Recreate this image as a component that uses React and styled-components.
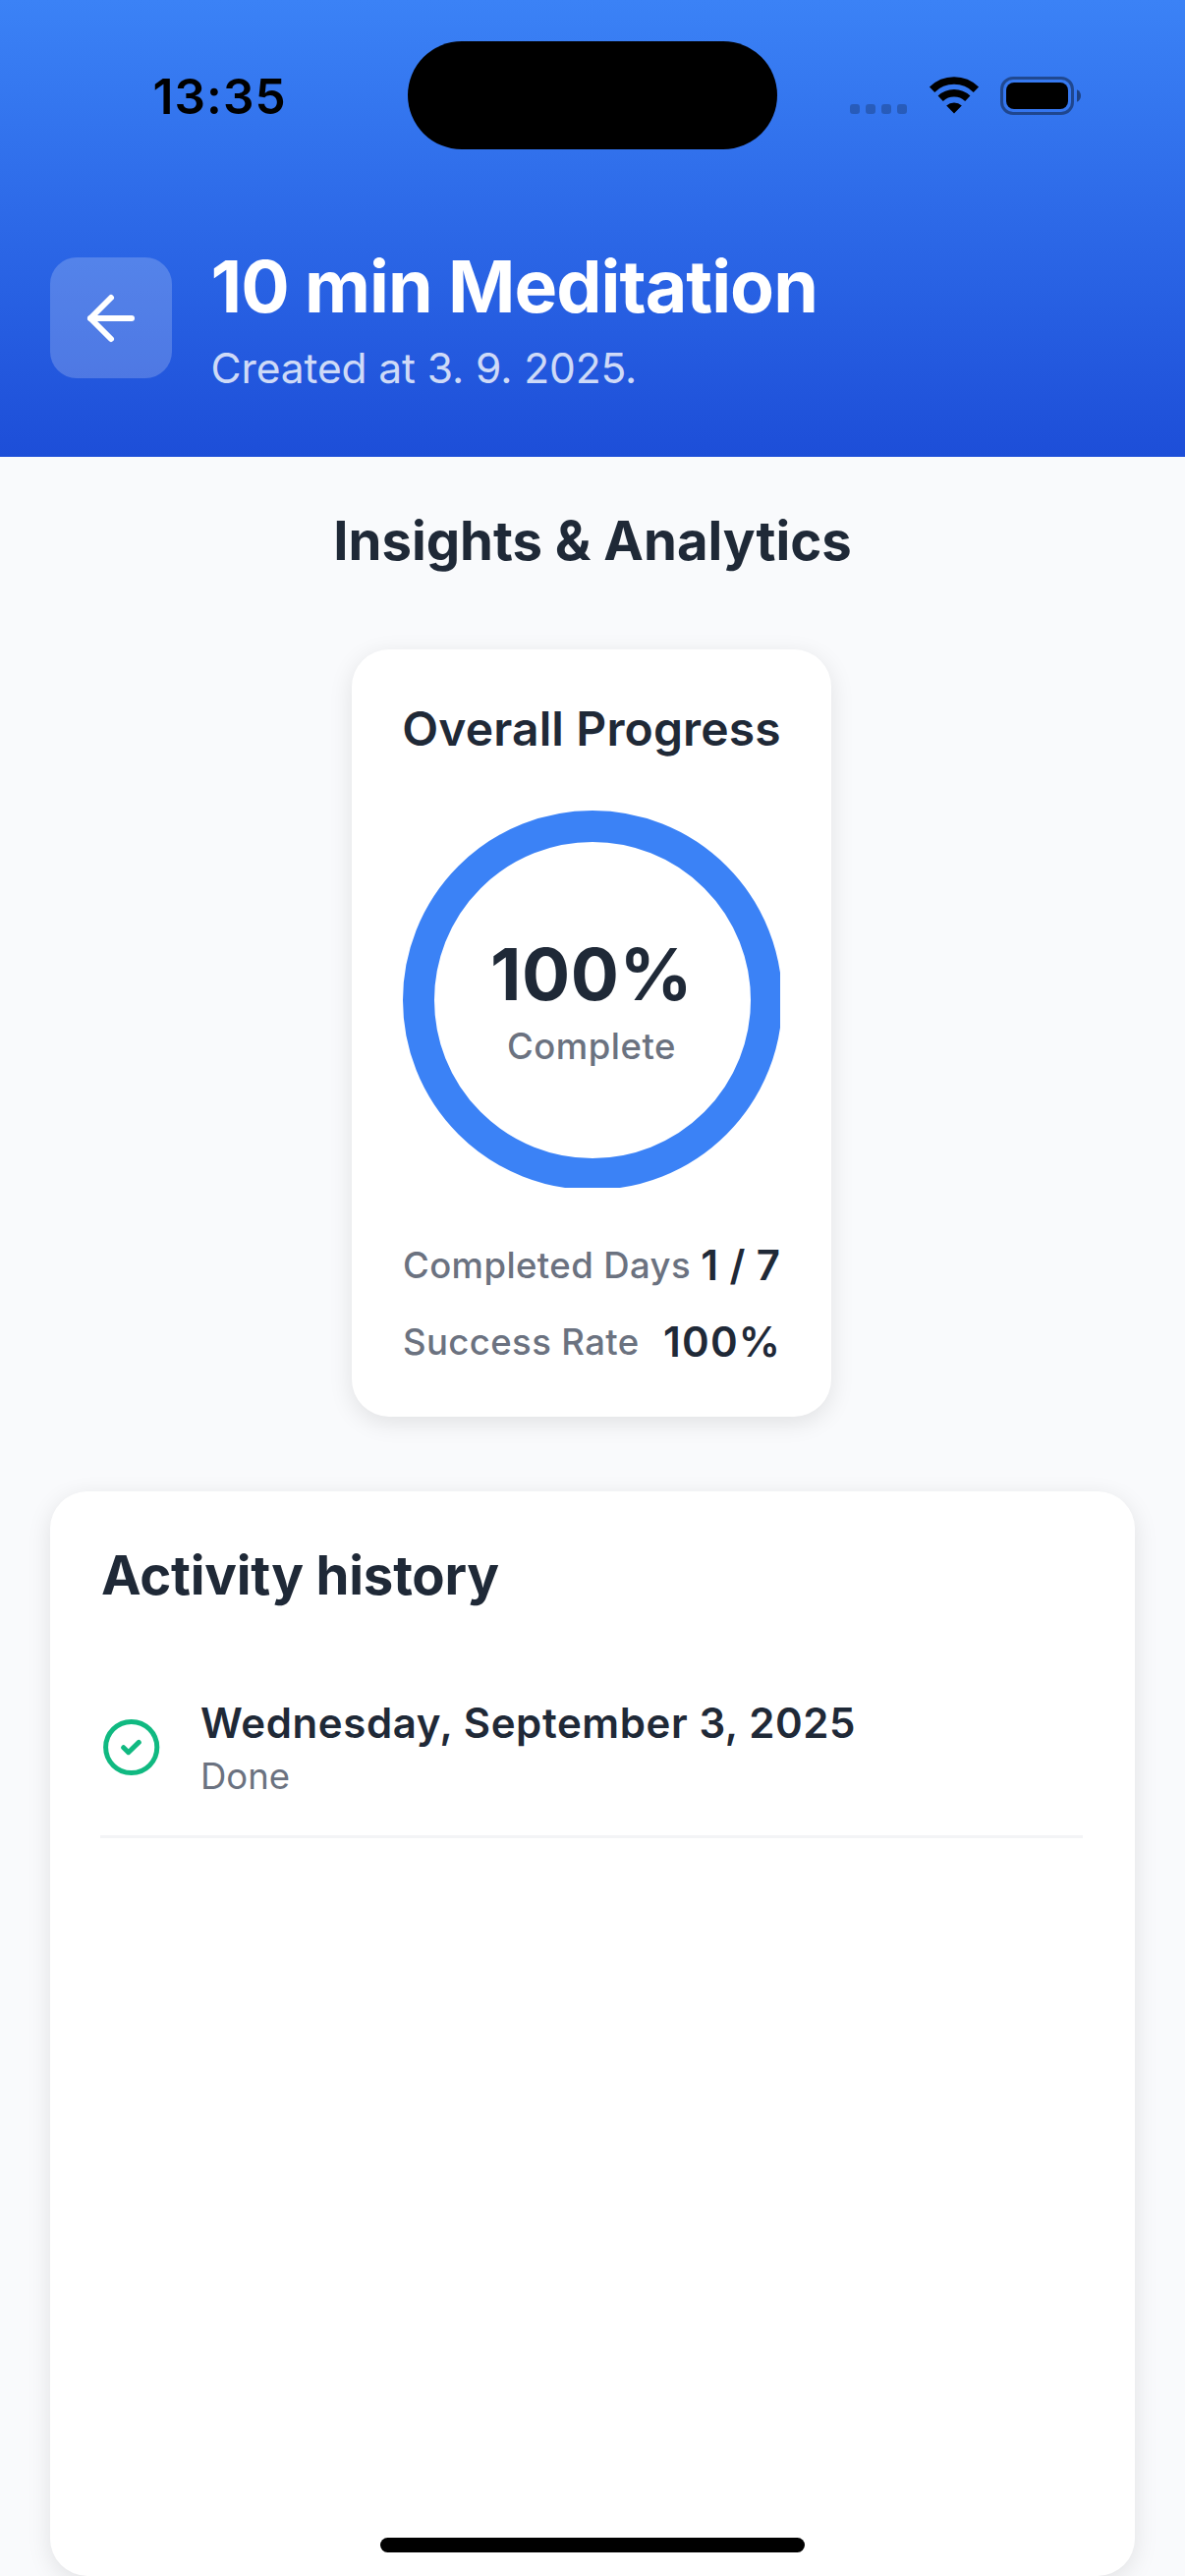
import React from "react";
import styled, { createGlobalStyle } from "styled-components";
import { ArrowLeft } from "lucide-react";

const GlobalStyle = createGlobalStyle`
  * { box-sizing: border-box; }
  html, body { margin: 0; padding: 0; background: #f9fafc; }
  body { font-family: Inter, "Liberation Sans", sans-serif; overflow: hidden; }
`;

const Screen = styled.main`
  position: relative;
  display: flex;
  flex-direction: column;
  width: 1206px;
  height: 2622px;
  overflow: hidden;
  background: #f9fafc;
`;

const Header = styled.header`
  height: 465px;
  background: linear-gradient(180deg, #3b82f6 0%, #1d4ed8 100%);
`;

const StatusBar = styled.div`
  display: grid;
  grid-template-columns: 415px 376px 1fr;
  height: 248px;
  padding-top: 42px;
  align-items: start;
`;

const Time = styled.span`
  padding-left: 155.5px;
  margin-top: 26px;
  font-size: 49.5px;
  line-height: 60px;
  font-weight: 600;
  letter-spacing: 1.1px;
  color: #000;
`;

const Island = styled.div`
  height: 110px;
  border-radius: 55px;
  background: #000;
`;

const StatusIcons = styled.div`
  display: flex;
  align-items: flex-end;
  height: 75px;
  padding-left: 74px;
`;

const Signal = styled.div`
  display: flex;
  gap: 6px;
  margin-bottom: 1px;
`;

const SignalDot = styled.i`
  width: 10px;
  height: 10px;
  border-radius: 3px;
  background: rgba(0, 0, 0, 0.22);
`;

const WifiIcon = styled.svg`
  width: 52px;
  height: 38px;
  margin: 0 21px 1px 22px;
`;

const BatteryIcon = styled.svg`
  width: 84px;
  height: 39px;
`;

const TitleRow = styled.div`
  display: flex;
  align-items: center;
  gap: 39.5px;
  height: 153px;
  padding-left: 51px;
`;

const BackButton = styled.button`
  display: flex;
  align-items: center;
  justify-content: center;
  width: 124px;
  height: 123px;
  margin-bottom: 2px;
  padding: 0;
  border: 0;
  border-radius: 27px;
  background: rgba(255, 255, 255, 0.2);
  color: #fff;
`;

const TitleBlock = styled.div`
  display: flex;
  flex-direction: column;
  gap: 13px;
`;

const Title = styled.h1`
  margin: 0;
  font-size: 73.4px;
  line-height: 88px;
  font-weight: 700;
  letter-spacing: -0.98px;
  color: #fff;
  white-space: nowrap;
`;

const Subtitle = styled.p`
  margin: 0;
  font-size: 42.5px;
  line-height: 52px;
  letter-spacing: -0.1px;
  color: rgba(255, 255, 255, 0.8);
  white-space: nowrap;
`;

const SectionTitle = styled.h2`
  margin: ${(p) => p.$margin};
  font-size: 54.5px;
  line-height: 66px;
  font-weight: 700;
  letter-spacing: ${(p) => p.$tracking}px;
  color: #1f2937;
  white-space: nowrap;
`;

const Content = styled.section`
  display: flex;
  flex-direction: column;
  align-items: center;
  padding: 52px 51px 0;
`;

const Card = styled.article`
  border-radius: 38px;
  background: #fff;
  box-shadow: 0 6px 24px rgba(0, 0, 0, 0.1);
`;

const ProgressCard = styled(Card)`
  display: flex;
  flex-direction: column;
  align-items: center;
  width: 488px;
  height: 781px;
  margin-right: 2px;
  padding: 52px 52px 0;
`;

const CardTitle = styled.h3`
  margin: 0 0 54px;
  font-size: 48px;
  line-height: 58px;
  font-weight: 600;
  letter-spacing: 0.15px;
  color: #1f2937;
  white-space: nowrap;
`;

const Ring = styled.div`
  display: grid;
  place-items: center;
  width: 384px;
  height: 384px;
  > * { grid-area: 1 / 1; }
`;

const RingLabel = styled.div`
  display: flex;
  flex-direction: column;
  align-items: center;
  gap: 7px;
`;

const Percent = styled.strong`
  font-size: 73px;
  line-height: 88px;
  font-weight: 700;
  letter-spacing: 0.5px;
  color: #1f2937;
`;

const Caption = styled.span`
  font-size: 36.5px;
  line-height: 44px;
  font-weight: ${(p) => p.$weight || 500};
  letter-spacing: ${(p) => p.$tracking || 0}px;
  color: #6b7280;
  white-space: nowrap;
`;

const Stats = styled.div`
  display: flex;
  flex-direction: column;
  gap: 26px;
  width: 100%;
  margin-top: 53px;
`;

const StatRow = styled.div`
  display: flex;
  justify-content: space-between;
  align-items: center;
  height: 52px;
  padding-bottom: 1px;
`;

const StatValue = styled.span`
  font-size: 42px;
  line-height: 52px;
  font-weight: 600;
  letter-spacing: ${(p) => p.$tracking || 0}px;
  margin-right: ${(p) => -(p.$tracking || 0)}px;
  color: #1f2937;
  white-space: nowrap;
`;

const HistoryCard = styled(Card)`
  align-self: stretch;
  height: 1104px;
  margin-top: 76px;
  padding: 52px 53px 0 51px;
`;

const HistoryItem = styled.div`
  display: flex;
  align-items: center;
  height: 181px;
  border-bottom: 3px solid #f3f4f6;
`;

const CheckIcon = styled.svg`
  width: 64px;
  height: 64px;
  margin-right: 38px;
`;

const ItemText = styled.div`
  display: flex;
  flex-direction: column;
  gap: 6px;
`;

const HomeIndicator = styled.div`
  position: absolute;
  left: 387px;
  bottom: 24px;
  width: 432px;
  height: 15px;
  border-radius: 8px;
  background: #000;
`;

export default function App() {
  return (
    <Screen>
      <GlobalStyle />
      <Header>
        <StatusBar>
          <Time>13:35</Time>
          <Island />
          <StatusIcons>
            <Signal>
              <SignalDot />
              <SignalDot />
              <SignalDot />
              <SignalDot />
            </Signal>
            <WifiIcon viewBox="0 0 52 38" fill="none" stroke="#000" strokeWidth="7.6">
              <path d="M3.6 13.2A32 32 0 0 1 48.4 13.2" />
              <path d="M12.2 22.2A20 20 0 0 1 39.8 22.2" />
              <path d="M26 37.4L18.2 29.6A11.5 11.5 0 0 1 33.8 29.6Z" fill="#000" stroke="none" />
            </WifiIcon>
            <BatteryIcon viewBox="0 0 84 39">
              <rect x="1.5" y="1.5" width="72" height="36" rx="11.5" fill="none" stroke="#000" strokeOpacity="0.4" strokeWidth="3" />
              <rect x="6" y="6" width="63" height="27" rx="8" />
              <path d="M78 13.2C80.6 14.2 82 16.8 82 19.5S80.6 24.8 78 25.8Z" fillOpacity="0.45" />
            </BatteryIcon>
          </StatusIcons>
        </StatusBar>
        <TitleRow>
          <BackButton aria-label="Back">
            <ArrowLeft size={72} strokeWidth={2} />
          </BackButton>
          <TitleBlock>
            <Title>10 min Meditation</Title>
            <Subtitle>Created at 3. 9. 2025.</Subtitle>
          </TitleBlock>
        </TitleRow>
      </Header>

      <Content>
        <SectionTitle $margin="0 0 78px" $tracking={-0.03}>Insights &amp; Analytics</SectionTitle>

        <ProgressCard>
          <CardTitle>Overall Progress</CardTitle>
          <Ring>
            <svg width="384" height="384" viewBox="0 0 384 384">
              <circle cx="193" cy="193" r="177" fill="none" stroke="#3b82f6" strokeWidth="32" />
            </svg>
            <RingLabel>
              <Percent>100%</Percent>
              <Caption $tracking={0.5}>Complete</Caption>
            </RingLabel>
          </Ring>
          <Stats>
            <StatRow>
              <Caption $tracking={0.4}>Completed Days</Caption>
              <StatValue $tracking={0.4}>1 / 7</StatValue>
            </StatRow>
            <StatRow>
              <Caption $tracking={0.4}>Success Rate</Caption>
              <StatValue $tracking={1.2}>100%</StatValue>
            </StatRow>
          </Stats>
        </ProgressCard>

        <HistoryCard>
          <SectionTitle $margin="0 0 54px 1px" $tracking={-0.22}>Activity history</SectionTitle>
          <HistoryItem>
            <CheckIcon viewBox="0 0 64 64" fill="none" stroke="#10b981" strokeWidth="5" strokeLinecap="round" strokeLinejoin="round">
              <circle cx="31.7" cy="31.5" r="26.1" />
              <path d="M23.7 31.7L28.7 36.7L39.3 26.4" />
            </CheckIcon>
            <ItemText>
              <StatValue $tracking={0.6}>Wednesday, September 3, 2025</StatValue>
              <Caption $weight={400}>Done</Caption>
            </ItemText>
          </HistoryItem>
        </HistoryCard>
      </Content>

      <HomeIndicator />
    </Screen>
  );
}
